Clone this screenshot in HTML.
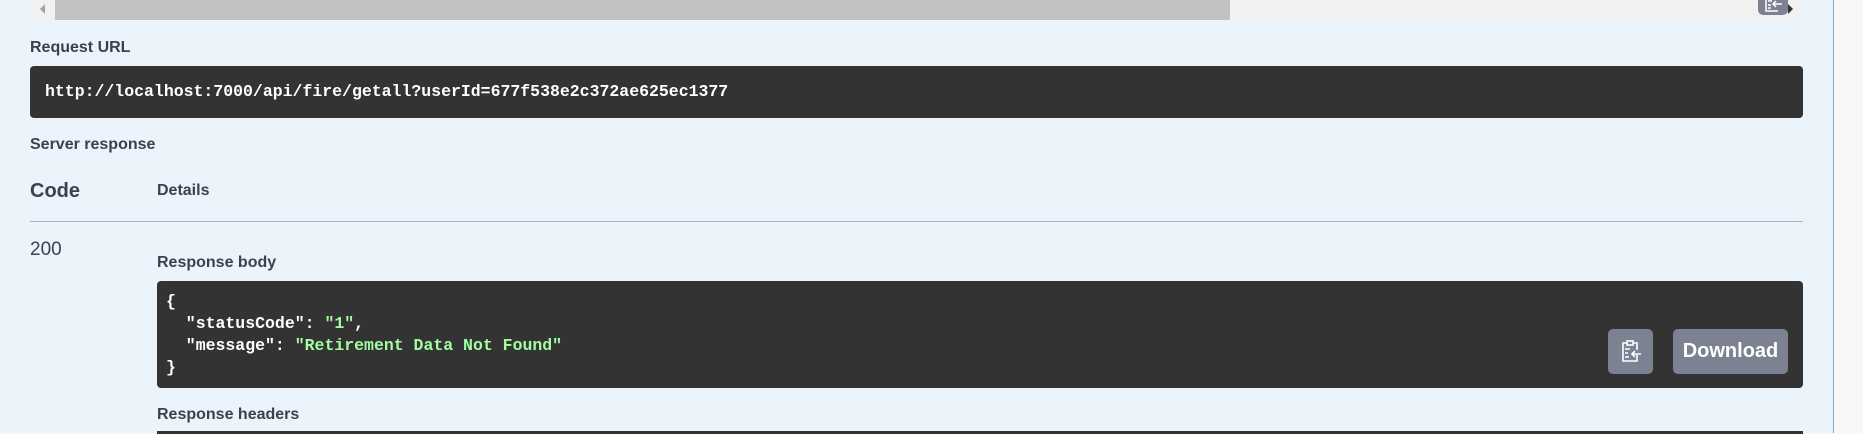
<!DOCTYPE html>
<html><head><style>
body{margin:0;width:1863px;height:433px;overflow:hidden;background:#f8f8f8;font-family:"Liberation Sans",sans-serif;position:relative}
.main{position:absolute;left:0;top:0;width:1833px;height:433px;background:#ebf3fb;border-right:1px solid #7aa7e8}
.a{position:absolute}
.lbl{font-weight:bold;font-size:16px;color:#3b4151}
.dark{background:#333;border-radius:4px}
.mono{font-family:"Liberation Mono",monospace;font-weight:bold;font-size:16.5px;color:#fff}
.btn{background:#7d8293;border-radius:5px}
</style></head><body>
<div class="main">
<div class="a" style="left:30px;top:0;width:1772px;height:20px;background:#f1f1f1"></div>
<div class="a" style="left:55px;top:0;width:1175px;height:20px;background:#c1c1c1"></div>
<div class="a" style="left:40px;top:4px;width:0;height:0;border-top:5px solid transparent;border-bottom:5px solid transparent;border-right:5px solid #a3a3a3"></div>
<div class="a btn" style="left:1758px;top:-8px;width:30px;height:23px"></div>
<svg class="a" style="left:1764px;top:-5px" width="20" height="19" viewBox="0 0 20 19" fill="none" stroke="#fff" stroke-width="1.5"><path d="M2 0v16h12M4 6h4M4 10h3M4 13h3M18 9h-9M12 6l-3 3 3 3"/></svg>
<div class="a" style="left:1788px;top:4px;width:0;height:0;border-top:5px solid transparent;border-bottom:5px solid transparent;border-left:5px solid #333"></div>
<div class="a lbl" style="left:30px;top:39px">Request URL</div>
<div class="a dark" style="left:30px;top:66px;width:1773px;height:52px"></div>
<div class="a mono" style="left:45px;top:82px">http://localhost:7000/api/fire/getall?userId=677f538e2c372ae625ec1377</div>
<div class="a lbl" style="left:30px;top:136px">Server response</div>
<div class="a" style="left:30px;top:180px;font-weight:bold;font-size:20px;color:#3b4151">Code</div>
<div class="a lbl" style="left:157px;top:182px">Details</div>
<div class="a" style="left:30px;top:221px;width:1773px;height:1px;background:#a6b3c6"></div>
<div class="a" style="left:30px;top:239px;font-size:19px;color:#3b4151">200</div>
<div class="a lbl" style="left:157px;top:254px">Response body</div>
<div class="a dark" style="left:157px;top:281px;width:1646px;height:107px"></div>
<pre class="a mono" style="left:166px;top:291px;margin:0;line-height:22px">{
  "statusCode": <span style="color:#a2fca2">"1"</span>,
  "message": <span style="color:#a2fca2">"Retirement Data Not Found"</span>
}</pre>
<div class="a btn" style="left:1608px;top:329px;width:45px;height:45px"></div>
<svg class="a" style="left:1620px;top:340px" width="22" height="23" viewBox="0 0 22 23" fill="none" stroke="#fff" stroke-width="1.6"><path d="M7 3h-4v18h14v-6M17 10v-7h-4"/><rect x="7" y="1" width="6" height="4"/><path d="M5 9h5M5 13h3M5 17h4M21 14h-9M15 11l-3 3 3 3"/></svg>
<div class="a btn" style="left:1673px;top:329px;width:115px;height:45px;color:#fff;font-weight:bold;font-size:20px;line-height:45px;text-align:center">Download</div>
<div class="a lbl" style="left:157px;top:406px">Response headers</div>
<div class="a" style="left:157px;top:431px;width:1646px;height:3px;background:#333"></div>
</div>
</body></html>
